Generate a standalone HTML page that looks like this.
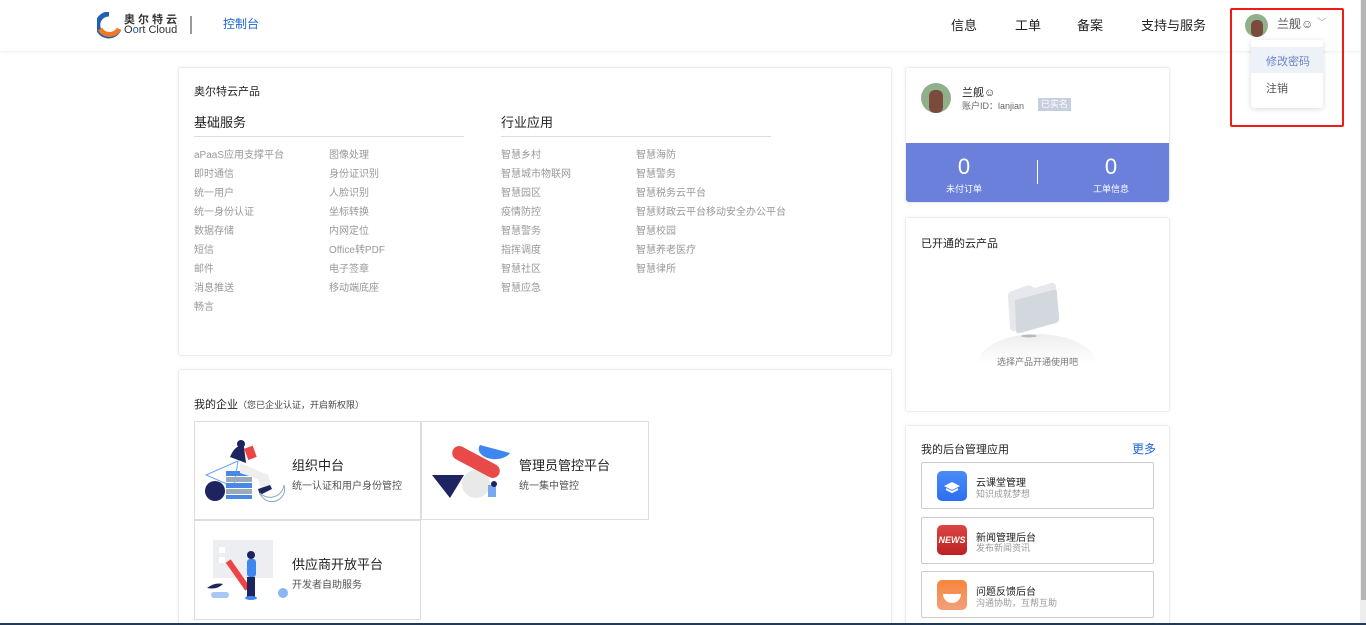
<!DOCTYPE html>
<html style="width:1366px;height:625px;overflow:hidden"><head><meta charset="utf-8"><style>
*{margin:0;padding:0;box-sizing:border-box}
body{width:1366px;height:625px;overflow:hidden;background:#fff;font-family:"Liberation Sans","Noto Sans CJK SC",sans-serif;color:#333;position:relative}
.a{position:absolute}
.hdr{left:0;top:0;width:1360px;height:51px;background:#fff;box-shadow:0 1px 3px rgba(0,0,0,.08)}
.nav{font-size:13px;color:#222;top:15px}
.panel{background:#fff;border:1px solid #ececec;border-radius:3px;box-shadow:0 0 4px rgba(0,0,0,.06)}
.it{font-size:10px;color:#999;position:absolute;white-space:nowrap}
.card{border:1px solid #ddd;background:#fff}
.ct{font-size:13px;color:#222}
.cs{font-size:10px;color:#555}
.app{border:1px solid #ccc;border-radius:2px;background:#fff}
</style></head><body>
<div class="a hdr"></div>
<svg class="a" style="left:97px;top:12px" width="24" height="27" viewBox="0 0 24 27"><path d="M12 2a11 11 0 1 0 10 15" fill="none" stroke="#1f5fb4" stroke-width="5"/><path d="M3 17a11 11 0 0 0 19 0" fill="none" stroke="#f07a22" stroke-width="5"/></svg>
<div class="a" style="left:124px;top:11px;font-size:11px;font-weight:bold;letter-spacing:3px;color:#333">奥尔特云</div>
<div class="a" style="left:124px;top:24px;font-size:11px;color:#333">O<span style="color:#1f5fb4">o</span>rt Cloud</div>
<div class="a" style="left:190px;top:16px;width:2px;height:18px;background:#999"></div>
<div class="a" style="left:223px;top:15px;font-size:12px;color:#1a66d6">控制台</div>
<div class="a nav" style="left:951px">信息</div>
<div class="a nav" style="left:1015px">工单</div>
<div class="a nav" style="left:1077px">备案</div>
<div class="a nav" style="left:1141px">支持与服务</div>
<div class="a" style="left:1245px;top:14px;width:23px;height:23px;border-radius:50%;background:#8fb08a;overflow:hidden"><div style="margin:6px 0 0 6px;width:12px;height:17px;background:#7a4b3c;border-radius:5px"></div></div>
<div class="a" style="left:1277px;top:15px;font-size:12px;color:#555">兰舰☺</div>
<div class="a" style="left:1317px;top:14px;font-size:10px;color:#aaa">﹀</div>
<div class="a" style="left:1251px;top:40px;width:72px;height:68px;background:#fff;border-radius:3px;box-shadow:0 1px 6px rgba(0,0,0,.15)"></div>
<div class="a" style="left:1251px;top:47px;width:72px;height:26px;background:#edf1f8"></div>
<div class="a" style="left:1266px;top:53px;font-size:11px;color:#6b83c4">修改密码</div>
<div class="a" style="left:1266px;top:80px;font-size:11px;color:#555">注销</div>
<div class="a" style="left:1230px;top:8px;width:114px;height:119px;border:2px solid #f01b14;border-radius:2px"></div>

<div class="a panel" style="left:178px;top:67px;width:714px;height:289px"></div>
<div class="a" style="left:194px;top:83px;font-size:11px;color:#222">奥尔特云产品</div>
<div class="a" style="left:194px;top:112px;font-size:13px;color:#222">基础服务</div>
<div class="a" style="left:194px;top:136px;width:270px;height:1px;background:#ddd"></div>
<div class="a" style="left:501px;top:112px;font-size:13px;color:#222">行业应用</div>
<div class="a" style="left:501px;top:136px;width:270px;height:1px;background:#ddd"></div>
<div class="it" style="left:194px;top:146px;line-height:19px">aPaaS应用支撑平台<br>即时通信<br>统一用户<br>统一身份认证<br>数据存储<br>短信<br>邮件<br>消息推送<br>畅言</div>
<div class="it" style="left:329px;top:146px;line-height:19px">图像处理<br>身份证识别<br>人脸识别<br>坐标转换<br>内网定位<br>Office转PDF<br>电子签章<br>移动端底座</div>
<div class="it" style="left:501px;top:146px;line-height:19px">智慧乡村<br>智慧城市物联网<br>智慧园区<br>疫情防控<br>智慧警务<br>指挥调度<br>智慧社区<br>智慧应急</div>
<div class="it" style="left:636px;top:146px;line-height:19px">智慧海防<br>智慧警务<br>智慧税务云平台<br>智慧财政云平台移动安全办公平台<br>智慧校园<br>智慧养老医疗<br>智慧律所</div>

<div class="a panel" style="left:178px;top:369px;width:714px;height:256px;border-bottom:none"></div>
<div class="a" style="left:194px;top:396px;font-size:11px;color:#222">我的企业<span style="font-size:9px;color:#444">（您已企业认证，开启新权限）</span></div>
<div class="a card" style="left:194px;top:421px;width:227px;height:99px"></div>
<div class="a card" style="left:421px;top:421px;width:228px;height:99px"></div>
<div class="a card" style="left:194px;top:520px;width:227px;height:100px"></div>
<svg class="a" style="left:200px;top:435px" width="90" height="70" viewBox="0 0 90 70"><circle cx="15" cy="56" r="10" fill="#1e2460"/><path d="M6 40 L38 26 L34 52 Z" fill="none" stroke="#6aa6f5" stroke-width="1"/><rect x="26" y="36" width="26" height="5" fill="#4a88e8"/><rect x="26" y="42" width="26" height="5" fill="#9ab"/><rect x="26" y="48" width="26" height="5" fill="#4a88e8"/><rect x="26" y="54" width="26" height="5" fill="#9ab"/><rect x="26" y="60" width="26" height="4" fill="#4a88e8"/><path d="M30 22 q6 -14 14 -10 l2 16 z" fill="#1e2460"/><circle cx="41" cy="9" r="4" fill="#1e2460"/><rect x="46" y="12" width="9" height="12" fill="#e44" transform="rotate(-20 50 18)"/><path d="M40 28 L68 40 L72 54 L62 56 L58 44 L40 38z" fill="#eee"/><path d="M58 54 l12 -4 l2 4 l-12 6z" fill="#1e2460"/><path d="M60 58 a12 12 0 0 0 24 -8 a14 14 0 0 1 -24 8" fill="none" stroke="#8ab" stroke-width="1"/></svg>
<div class="a ct" style="left:292px;top:455px">组织中台</div>
<div class="a cs" style="left:292px;top:477px">统一认证和用户身份管控</div>
<svg class="a" style="left:430px;top:440px" width="85" height="60" viewBox="0 0 85 60"><path d="M50 5 a16 10 0 0 0 30 8 z" fill="#3f87f0"/><path d="M2 35 L34 35 L20 58z" fill="#1e2460"/><circle cx="46" cy="44" r="14" fill="#e9e9e9"/><rect x="20" y="15" width="52" height="14" rx="7" fill="#e84a4a" transform="rotate(28 46 22)"/><rect x="58" y="45" width="8" height="12" fill="#7aa8f0"/><circle cx="64" cy="44" r="3" fill="#1e2460"/></svg>
<div class="a ct" style="left:519px;top:455px">管理员管控平台</div>
<div class="a cs" style="left:519px;top:477px">统一集中管控</div>
<svg class="a" style="left:205px;top:540px" width="95" height="65" viewBox="0 0 95 65"><rect x="8" y="0" width="60" height="38" fill="#eceef1"/><rect x="14" y="7" width="6" height="6" fill="#fff"/><rect x="14" y="17" width="6" height="6" fill="#fff"/><rect x="30" y="18" width="6" height="34" fill="#e44" transform="rotate(-35 33 35)"/><circle cx="46" cy="15" r="4" fill="#1e2460"/><rect x="42" y="19" width="9" height="18" rx="3" fill="#3f87f0"/><rect x="42" y="37" width="8" height="20" fill="#1e2460"/><ellipse cx="46" cy="58" rx="6" ry="2" fill="#3f87f0"/><circle cx="78" cy="53" r="5" fill="#8ab6f5"/><path d="M2 48 q8 -6 16 -4 q-6 6 -16 4" fill="#1e2460"/><rect x="6" y="52" width="18" height="6" rx="3" fill="#a9c6f5"/></svg>
<div class="a ct" style="left:292px;top:554px">供应商开放平台</div>
<div class="a cs" style="left:292px;top:576px">开发者自助服务</div>

<div class="a panel" style="left:905px;top:67px;width:265px;height:136px"></div>
<div class="a" style="left:921px;top:83px;width:30px;height:30px;border-radius:50%;background:#8fb08a;overflow:hidden"><div style="margin:7px 0 0 8px;width:14px;height:23px;background:#7a4b3c;border-radius:6px"></div></div>
<div class="a" style="left:962px;top:84px;font-size:11px;color:#222">兰舰☺</div>
<div class="a" style="left:962px;top:99px;font-size:9px;color:#666">账户ID：lanjian</div>
<div class="a" style="left:1038px;top:98px;width:33px;height:13px;background:#c5cfe0;color:#fff;font-size:9px;text-align:center;line-height:13px">已实名</div>
<div class="a" style="left:906px;top:143px;width:263px;height:59px;background:#6a80db;border-radius:0 0 3px 3px"></div>
<div class="a" style="left:906px;top:155px;width:116px;text-align:center;color:#fff;font-size:22px;line-height:24px">0</div>
<div class="a" style="left:906px;top:182px;width:116px;text-align:center;color:#fff;font-size:9px">未付订单</div>
<div class="a" style="left:1037px;top:160px;width:1px;height:24px;background:#fff"></div>
<div class="a" style="left:1053px;top:155px;width:116px;text-align:center;color:#fff;font-size:22px;line-height:24px">0</div>
<div class="a" style="left:1053px;top:182px;width:116px;text-align:center;color:#fff;font-size:9px">工单信息</div>

<div class="a panel" style="left:905px;top:217px;width:265px;height:195px"></div>
<div class="a" style="left:921px;top:235px;font-size:11px;color:#222">已开通的云产品</div>
<div class="a" style="left:978px;top:334px;width:118px;height:30px;border-radius:59px 59px 0 0/30px 30px 0 0;background:linear-gradient(#eee,#fff)"></div>
<svg class="a" style="left:1000px;top:278px" width="62" height="62" viewBox="0 0 62 62"><path d="M8 18 q0 -4 4 -5 l14 -5 q3 -1 5 0 l4 2 l16 -5 q4 -1 5 3 l3 30 q0 4 -4 5 l-40 10 q-4 1 -5 -3z" fill="#e6e8ec"/><path d="M15 22 l38 -10 q4 -1 4 3 l2 26 q0 3 -3 4 l-36 10 q-3 1 -4 -2z" fill="#d3d7de"/><ellipse cx="29" cy="58" rx="8" ry="1.5" fill="#bbb"/></svg>
<div class="a" style="left:905px;top:355px;width:265px;text-align:center;font-size:9px;color:#777">选择产品开通使用吧</div>

<div class="a panel" style="left:905px;top:425px;width:265px;height:200px;border-bottom:none"></div>
<div class="a" style="left:921px;top:441px;font-size:11px;color:#222">我的后台管理应用</div>
<div class="a" style="left:1132px;top:440px;font-size:12px;color:#1a66d6">更多</div>
<div class="a app" style="left:921px;top:462px;width:233px;height:47px"></div>
<div class="a" style="left:937px;top:471px;width:30px;height:30px;border-radius:5px;background:linear-gradient(#4b8cf7,#2b6ff0)"><svg width="30" height="30" viewBox="0 0 30 30"><path d="M7 15 l8 -4 l8 4 l-8 4z" fill="#fff"/><path d="M9 18 l6 3 l6 -3" fill="none" stroke="#fff" stroke-width="2"/></svg></div>
<div class="a" style="left:976px;top:474px;font-size:10px;color:#222">云课堂管理</div>
<div class="a" style="left:976px;top:487px;font-size:9px;color:#999">知识成就梦想</div>
<div class="a app" style="left:921px;top:517px;width:233px;height:47px"></div>
<div class="a" style="left:937px;top:525px;width:30px;height:30px;border-radius:5px;background:linear-gradient(#d44,#b22);color:#fff;font-size:9px;font-weight:bold;font-style:italic;line-height:30px;text-align:center">NEWS</div>
<div class="a" style="left:976px;top:529px;font-size:10px;color:#222">新闻管理后台</div>
<div class="a" style="left:976px;top:541px;font-size:9px;color:#999">发布新闻资讯</div>
<div class="a app" style="left:921px;top:571px;width:233px;height:47px"></div>
<div class="a" style="left:937px;top:580px;width:30px;height:30px;border-radius:5px;background:linear-gradient(#f7853d,#f0a07a)"><svg width="30" height="30" viewBox="0 0 30 30"><path d="M6 14 h18 a9 9 0 0 1 -18 0z" fill="#fff"/></svg></div>
<div class="a" style="left:976px;top:583px;font-size:10px;color:#222">问题反馈后台</div>
<div class="a" style="left:976px;top:596px;font-size:9px;color:#999">沟通协助，互帮互助</div>

<div class="a" style="left:1360px;top:0;width:6px;height:625px;background:#eee"></div>
<div class="a" style="left:1361px;top:0;width:5px;height:600px;background:#b5b5b5"></div>
<div class="a" style="left:0;top:623px;width:1366px;height:2px;background:#213a5a"></div>
</body></html>
